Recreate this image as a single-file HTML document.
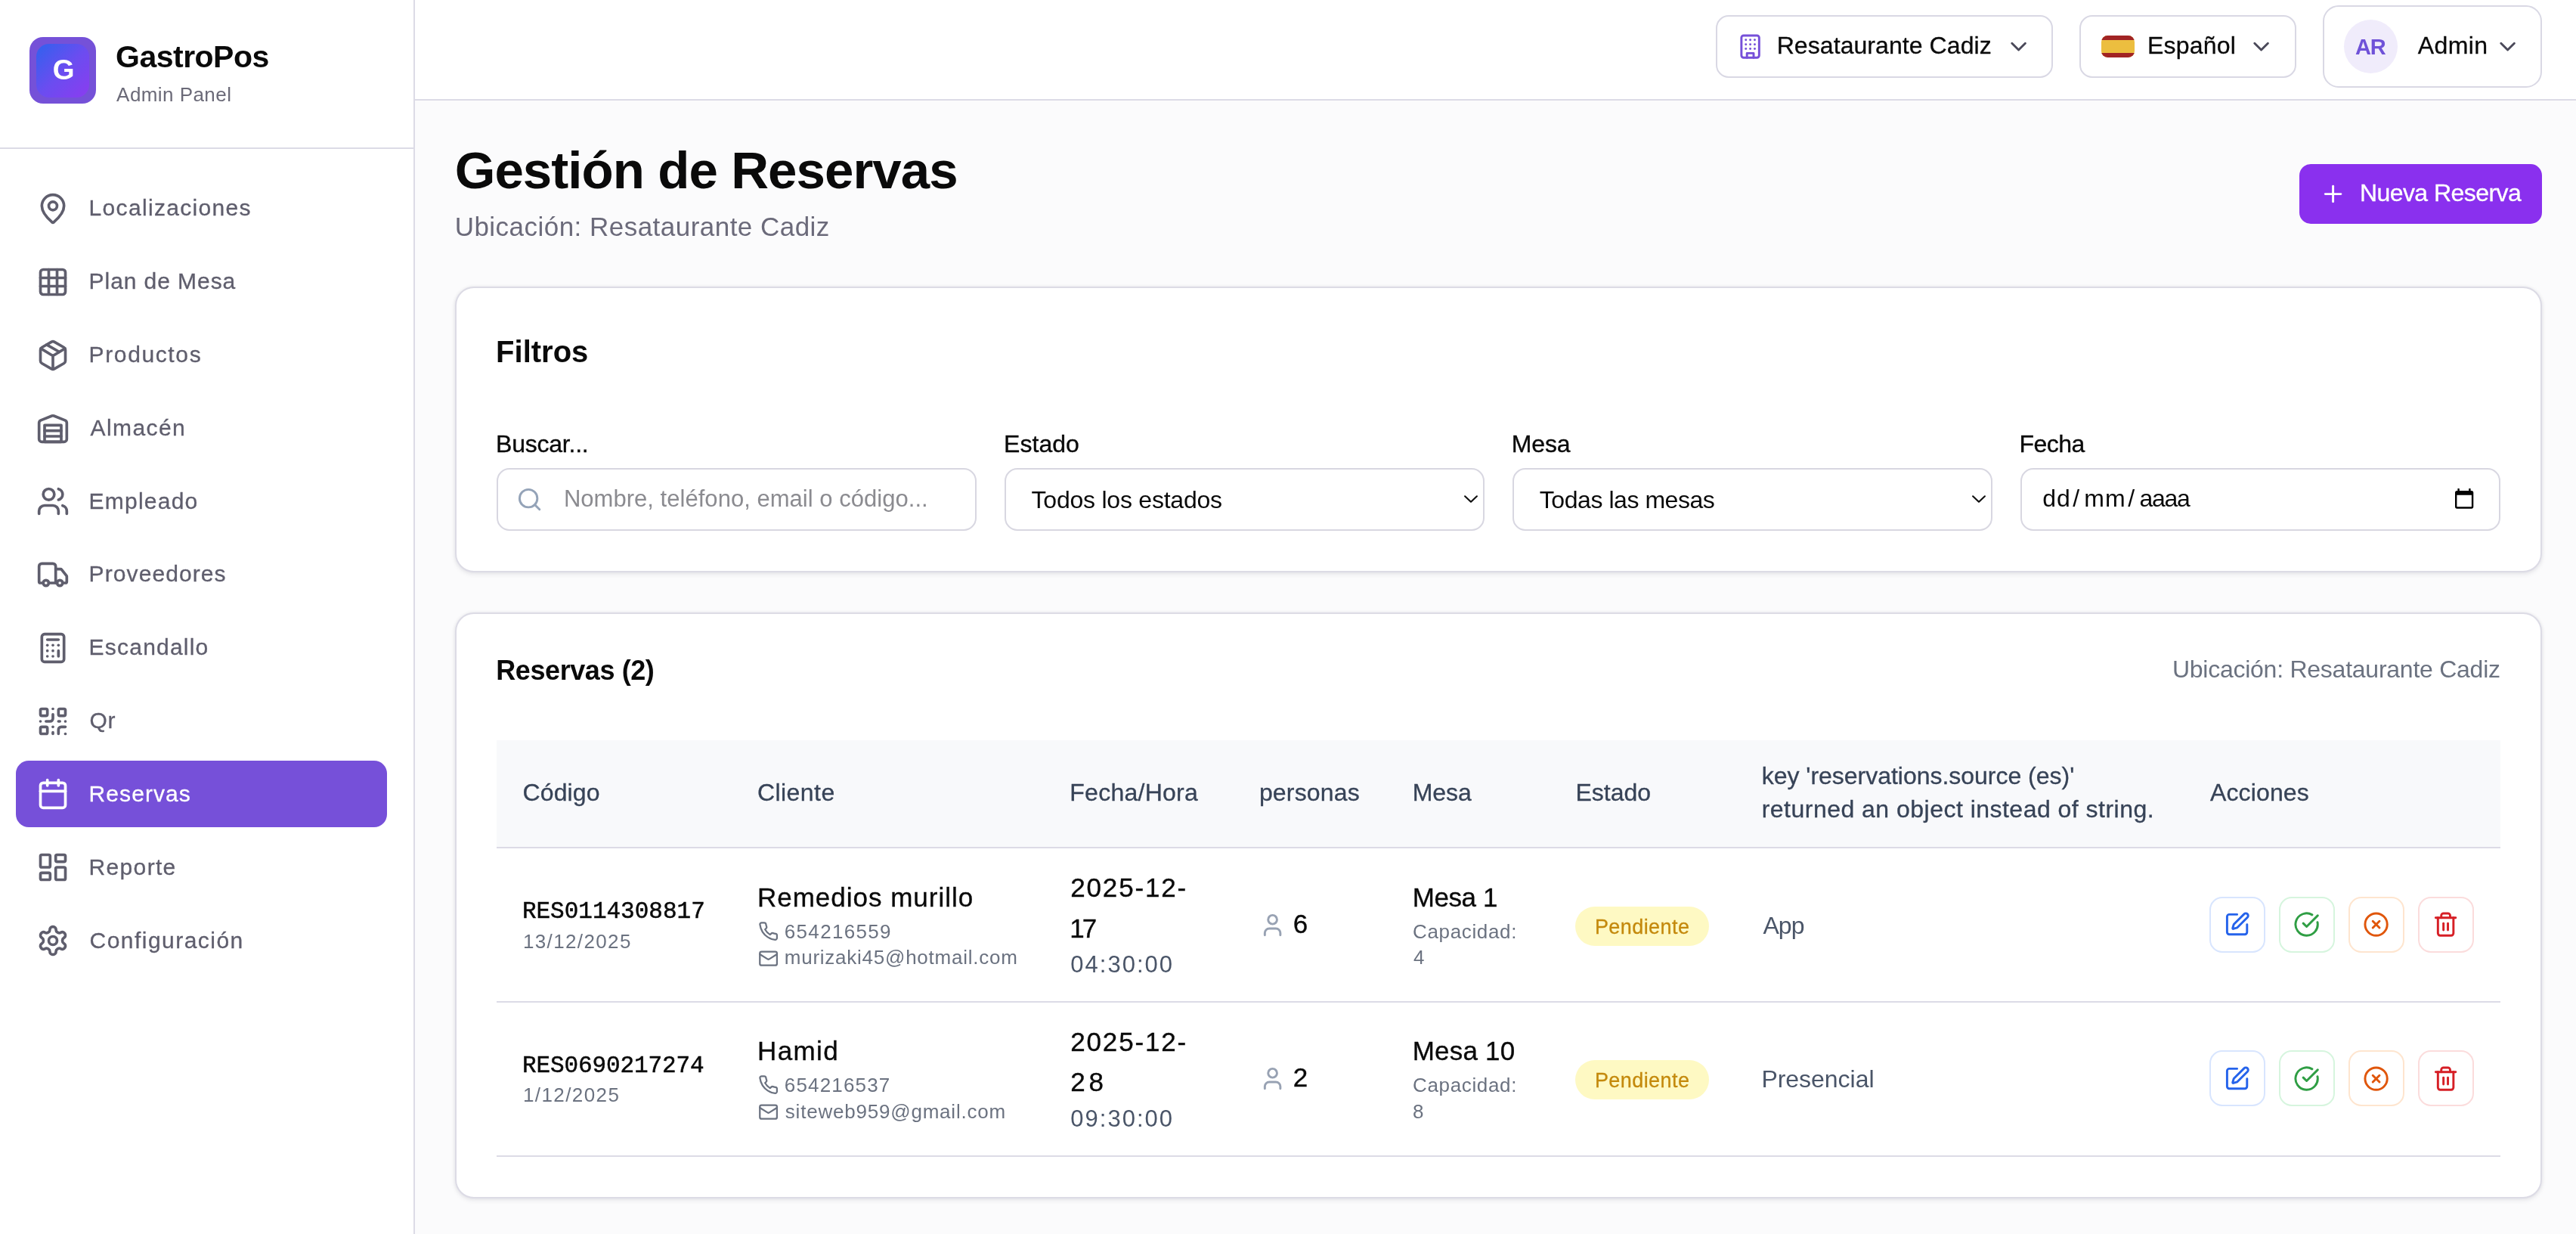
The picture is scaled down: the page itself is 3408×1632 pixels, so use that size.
<!DOCTYPE html><html lang="es"><head><meta charset="utf-8"><title>GastroPos - Gestión de Reservas</title><style>
*{margin:0;padding:0}
html,body{width:3408px;height:1632px;overflow:hidden;background:#fbfbfc}
body{font-family:"Liberation Sans",sans-serif;position:relative;will-change:transform}
.t{position:absolute;line-height:1;white-space:nowrap;font-weight:400;display:block;text-decoration:none}
.sans{font-family:"Liberation Sans",sans-serif}
.bold{font-family:"Liberation Sans",sans-serif;font-weight:700}
.mono{font-family:"Liberation Mono",monospace}
.ic{position:absolute;display:block;overflow:visible}
.sidebar{position:absolute;left:0;top:0;width:547px;height:1632px;background:#fff;border-right:2px solid #dcdbe6}
.topbar{position:absolute;left:549px;top:0;width:2859px;height:131px;background:#fff;border-bottom:2px solid #dcdbe6}
main{position:absolute;left:0;top:0;width:0;height:0}
button{font:inherit;padding:0;margin:0;cursor:pointer}
i{display:block}
@media (max-width:2600px){html{zoom:.5}}
</style></head><body><aside class="sidebar"><div class="logo" style="position:absolute;left:39.0px;top:49.0px;width:88.0px;height:88.0px;background:#7551d8;border-radius:18px;"><div style="position:absolute;left:9.0px;top:9.0px;width:70.0px;height:71.0px;background:linear-gradient(135deg,#2f62ee 0%,#6a4df0 50%,#8b3cf0 100%);border-radius:17px;"></div><span class="t bold" style="left:30.8px;top:25.0px;font-size:37px;color:#fff;">G</span></div><span class="t bold" style="left:153.1px;top:54.5px;font-size:41px;letter-spacing:-0.52px;color:#0a0a0a;">GastroPos</span><span class="t sans" style="left:154.1px;top:112.2px;font-size:26px;letter-spacing:0.44px;color:#6b6a78;">Admin Panel</span><div style="position:absolute;left:0.0px;top:195.0px;width:547.0px;height:2.0px;background:#dcdbe6;"></div><nav><a class="nav-item"><svg class="ic" style="left:47.9px;top:253.9px" width="44" height="44" viewBox="0 0 24 24" fill="none" stroke="#5f5e6d" stroke-width="2" stroke-linecap="round" stroke-linejoin="round"><path d="M20 10c0 4.993-5.539 10.193-7.399 11.799a1 1 0 0 1-1.202 0C9.539 20.193 4 14.993 4 10a8 8 0 0 1 16 0"/><circle cx="12" cy="10" r="3"/></svg><span class="t sans" style="left:117.6px;top:260.2px;font-size:30px;letter-spacing:1.32px;color:#5f5e6d;-webkit-text-stroke:0.3px #5f5e6d;">Localizaciones</span></a><a class="nav-item"><svg class="ic" style="left:47.9px;top:350.7px" width="44" height="44" viewBox="0 0 24 24" fill="none" stroke="#5f5e6d" stroke-width="2" stroke-linecap="round" stroke-linejoin="round"><rect width="18" height="18" x="3" y="3" rx="2"/><path d="M3 9h18"/><path d="M3 15h18"/><path d="M9 3v18"/><path d="M15 3v18"/></svg><span class="t sans" style="left:117.6px;top:357.0px;font-size:30px;letter-spacing:0.93px;color:#5f5e6d;-webkit-text-stroke:0.3px #5f5e6d;">Plan de Mesa</span></a><a class="nav-item"><svg class="ic" style="left:47.9px;top:447.5px" width="44" height="44" viewBox="0 0 24 24" fill="none" stroke="#5f5e6d" stroke-width="2" stroke-linecap="round" stroke-linejoin="round"><path d="M11 21.73a2 2 0 0 0 2 0l7-4A2 2 0 0 0 21 16V8a2 2 0 0 0-1-1.73l-7-4a2 2 0 0 0-2 0l-7 4A2 2 0 0 0 3 8v8a2 2 0 0 0 1 1.73z"/><path d="M12 22V12"/><path d="m3.3 7 7.703 4.734a2 2 0 0 0 1.994 0L20.7 7"/><path d="m7.5 4.27 9 5.15"/></svg><span class="t sans" style="left:117.6px;top:453.9px;font-size:30px;letter-spacing:1.62px;color:#5f5e6d;-webkit-text-stroke:0.3px #5f5e6d;">Productos</span></a><a class="nav-item"><svg class="ic" style="left:47.9px;top:544.3px" width="44" height="44" viewBox="0 0 24 24" fill="none" stroke="#5f5e6d" stroke-width="2" stroke-linecap="round" stroke-linejoin="round"><path d="M22 8.35V20a2 2 0 0 1-2 2H4a2 2 0 0 1-2-2V8.35A2 2 0 0 1 3.26 6.5l8-3.2a2 2 0 0 1 1.48 0l8 3.2A2 2 0 0 1 22 8.35Z"/><path d="M6 18h12"/><path d="M6 14h12"/><rect width="12" height="12" x="6" y="10"/></svg><span class="t sans" style="left:119.6px;top:550.7px;font-size:30px;letter-spacing:1.41px;color:#5f5e6d;-webkit-text-stroke:0.3px #5f5e6d;">Almacén</span></a><a class="nav-item"><svg class="ic" style="left:47.9px;top:641.1px" width="44" height="44" viewBox="0 0 24 24" fill="none" stroke="#5f5e6d" stroke-width="2" stroke-linecap="round" stroke-linejoin="round"><path d="M16 21v-2a4 4 0 0 0-4-4H6a4 4 0 0 0-4 4v2"/><circle cx="9" cy="7" r="4"/><path d="M22 21v-2a4 4 0 0 0-3-3.87"/><path d="M16 3.13a4 4 0 0 1 0 7.75"/></svg><span class="t sans" style="left:117.6px;top:647.6px;font-size:30px;letter-spacing:1.23px;color:#5f5e6d;-webkit-text-stroke:0.3px #5f5e6d;">Empleado</span></a><a class="nav-item"><svg class="ic" style="left:47.9px;top:737.9px" width="44" height="44" viewBox="0 0 24 24" fill="none" stroke="#5f5e6d" stroke-width="2" stroke-linecap="round" stroke-linejoin="round"><path d="M14 18V6a2 2 0 0 0-2-2H4a2 2 0 0 0-2 2v11a1 1 0 0 0 1 1h2"/><path d="M15 18H9"/><path d="M19 18h2a1 1 0 0 0 1-1v-3.65a1 1 0 0 0-.22-.624l-3.48-4.35A1 1 0 0 0 17.52 8H14"/><circle cx="17" cy="18" r="2"/><circle cx="7" cy="18" r="2"/></svg><span class="t sans" style="left:117.6px;top:744.4px;font-size:30px;letter-spacing:1.09px;color:#5f5e6d;-webkit-text-stroke:0.3px #5f5e6d;">Proveedores</span></a><a class="nav-item"><svg class="ic" style="left:47.9px;top:834.7px" width="44" height="44" viewBox="0 0 24 24" fill="none" stroke="#5f5e6d" stroke-width="2" stroke-linecap="round" stroke-linejoin="round"><rect width="16" height="20" x="4" y="2" rx="2"/><line x1="8" x2="16" y1="6" y2="6"/><line x1="16" x2="16" y1="14" y2="18"/><path d="M16 10h.01"/><path d="M12 10h.01"/><path d="M8 10h.01"/><path d="M12 14h.01"/><path d="M8 14h.01"/><path d="M12 18h.01"/><path d="M8 18h.01"/></svg><span class="t sans" style="left:117.6px;top:841.2px;font-size:30px;letter-spacing:1.21px;color:#5f5e6d;-webkit-text-stroke:0.3px #5f5e6d;">Escandallo</span></a><a class="nav-item"><svg class="ic" style="left:47.9px;top:931.5px" width="44" height="44" viewBox="0 0 24 24" fill="none" stroke="#5f5e6d" stroke-width="2" stroke-linecap="round" stroke-linejoin="round"><rect width="5" height="5" x="3" y="3" rx="1"/><rect width="5" height="5" x="16" y="3" rx="1"/><rect width="5" height="5" x="3" y="16" rx="1"/><path d="M21 16h-3a2 2 0 0 0-2 2v3"/><path d="M21 21v.01"/><path d="M12 7v3a2 2 0 0 1-2 2H7"/><path d="M3 12h.01"/><path d="M12 3h.01"/><path d="M12 16v.01"/><path d="M16 12h1"/><path d="M21 12v.01"/><path d="M12 21v-1"/></svg><span class="t sans" style="left:118.6px;top:938.1px;font-size:30px;letter-spacing:0.67px;color:#5f5e6d;-webkit-text-stroke:0.3px #5f5e6d;">Qr</span></a><div class="nav-active" style="position:absolute;left:21.0px;top:1006.0px;width:491.0px;height:88.0px;background:#7650d9;border-radius:17px;"></div><a class="nav-item"><svg class="ic" style="left:47.9px;top:1028.3px" width="44" height="44" viewBox="0 0 24 24" fill="none" stroke="#ffffff" stroke-width="2" stroke-linecap="round" stroke-linejoin="round"><path d="M8 2v4"/><path d="M16 2v4"/><rect width="18" height="18" x="3" y="4" rx="2"/><path d="M3 10h18"/></svg><span class="t sans" style="left:117.6px;top:1034.9px;font-size:30px;letter-spacing:1.08px;color:#ffffff;-webkit-text-stroke:0.3px #ffffff;">Reservas</span></a><a class="nav-item"><svg class="ic" style="left:47.9px;top:1125.1px" width="44" height="44" viewBox="0 0 24 24" fill="none" stroke="#5f5e6d" stroke-width="2" stroke-linecap="round" stroke-linejoin="round"><rect width="7" height="9" x="3" y="3" rx="1"/><rect width="7" height="5" x="14" y="3" rx="1"/><rect width="7" height="9" x="14" y="12" rx="1"/><rect width="7" height="5" x="3" y="16" rx="1"/></svg><span class="t sans" style="left:117.6px;top:1131.8px;font-size:30px;letter-spacing:1.33px;color:#5f5e6d;-webkit-text-stroke:0.3px #5f5e6d;">Reporte</span></a><a class="nav-item"><svg class="ic" style="left:47.9px;top:1221.9px" width="44" height="44" viewBox="0 0 24 24" fill="none" stroke="#5f5e6d" stroke-width="2" stroke-linecap="round" stroke-linejoin="round"><path d="M12.22 2h-.44a2 2 0 0 0-2 2v.18a2 2 0 0 1-1 1.73l-.43.25a2 2 0 0 1-2 0l-.15-.08a2 2 0 0 0-2.73.73l-.22.38a2 2 0 0 0 .73 2.73l.15.1a2 2 0 0 1 1 1.72v.51a2 2 0 0 1-1 1.74l-.15.09a2 2 0 0 0-.73 2.73l.22.38a2 2 0 0 0 2.73.73l.15-.08a2 2 0 0 1 2 0l.43.25a2 2 0 0 1 1 1.73V20a2 2 0 0 0 2 2h.44a2 2 0 0 0 2-2v-.18a2 2 0 0 1 1-1.73l.43-.25a2 2 0 0 1 2 0l.15.08a2 2 0 0 0 2.73-.73l.22-.39a2 2 0 0 0-.73-2.73l-.15-.08a2 2 0 0 1-1-1.74v-.5a2 2 0 0 1 1-1.74l.15-.09a2 2 0 0 0 .73-2.73l-.22-.38a2 2 0 0 0-2.73-.73l-.15.08a2 2 0 0 1-2 0l-.43-.25a2 2 0 0 1-1-1.73V4a2 2 0 0 0-2-2z"/><circle cx="12" cy="12" r="3"/></svg><span class="t sans" style="left:118.6px;top:1228.6px;font-size:30px;letter-spacing:1.46px;color:#5f5e6d;-webkit-text-stroke:0.3px #5f5e6d;">Configuración</span></a></nav></aside>
<header class="topbar"><div class="hbtn" style="position:absolute;left:1721.0px;top:20.0px;width:446.0px;height:83.0px;border:2px solid #d9d8e4;box-sizing:border-box;background:#fff;border-radius:17px;"><svg class="ic" style="left:25.9px;top:21.8px" width="35.2" height="35.2" viewBox="0 0 24 24" fill="none" stroke="#7650d9" stroke-width="2" stroke-linecap="round" stroke-linejoin="round"><rect width="16" height="20" x="4" y="2" rx="2" ry="2"/><path d="M9 22v-4h6v4"/><path d="M8 6h.01"/><path d="M16 6h.01"/><path d="M12 6h.01"/><path d="M12 10h.01"/><path d="M12 14h.01"/><path d="M16 10h.01"/><path d="M16 14h.01"/><path d="M8 10h.01"/><path d="M8 14h.01"/></svg><span class="t sans" style="left:78.7px;top:22.3px;font-size:32px;letter-spacing:0.07px;color:#0a0a0a;-webkit-text-stroke:0.3px #0a0a0a;">Resataurante Cadiz</span><svg class="ic" style="left:381.0px;top:22.4px" width="35.2" height="35.2" viewBox="0 0 24 24" fill="none" stroke="#4b4a5a" stroke-width="2" stroke-linecap="round" stroke-linejoin="round"><path d="m6 9 6 6 6-6"/></svg></div><div class="hbtn" style="position:absolute;left:2202.0px;top:20.0px;width:287.0px;height:83.0px;border:2px solid #d9d8e4;box-sizing:border-box;background:#fff;border-radius:17px;"><div class="flag" style="position:absolute;left:27.0px;top:24.6px;width:44.0px;height:29.3px;border-radius:8.5px;overflow:hidden;background:#ecbe3f;"><i style="position:absolute;left:0;top:0;width:100%;height:6.2px;background:#a12424"></i><i style="position:absolute;left:0;bottom:0;width:100%;height:6.2px;background:#a12424"></i></div><span class="t sans" style="left:87.9px;top:22.3px;font-size:32px;letter-spacing:0.21px;color:#0a0a0a;-webkit-text-stroke:0.3px #0a0a0a;">Español</span><svg class="ic" style="left:221.0px;top:22.4px" width="35.2" height="35.2" viewBox="0 0 24 24" fill="none" stroke="#4b4a5a" stroke-width="2" stroke-linecap="round" stroke-linejoin="round"><path d="m6 9 6 6 6-6"/></svg></div><div class="hbtn" style="position:absolute;left:2524.0px;top:7.0px;width:290.0px;height:109.0px;border:2px solid #d9d8e4;box-sizing:border-box;background:#fff;border-radius:21px;"><div style="position:absolute;left:26.0px;top:17.0px;width:71.0px;height:71.0px;border-radius:50%;background:#f0ecfb;"><span class="t bold" style="left:14.9px;top:21.8px;font-size:29px;letter-spacing:-1.14px;color:#6f52d8;">AR</span></div><span class="t sans" style="left:123.8px;top:35.3px;font-size:32px;letter-spacing:0.37px;color:#0a0a0a;-webkit-text-stroke:0.3px #0a0a0a;">Admin</span><svg class="ic" style="left:224.9px;top:35.4px" width="35.2" height="35.2" viewBox="0 0 24 24" fill="none" stroke="#4b4a5a" stroke-width="2" stroke-linecap="round" stroke-linejoin="round"><path d="m6 9 6 6 6-6"/></svg></div></header>
<main><h1 class="t bold" style="left:601.7px;top:190.9px;font-size:69px;letter-spacing:-0.93px;color:#0a0a0a;">Gestión de Reservas</h1><p class="t sans" style="left:601.7px;top:281.6px;font-size:35px;letter-spacing:0.47px;color:#6b6a7a;">Ubicación: Resataurante Cadiz</p><div class="btn-primary" style="position:absolute;left:3042.0px;top:217.0px;width:321.0px;height:79.0px;background:#8a30ee;border-radius:15px;"><svg class="ic" style="left:26.9px;top:21.9px" width="35.2" height="35.2" viewBox="0 0 24 24" fill="none" stroke="#fff" stroke-width="2" stroke-linecap="round" stroke-linejoin="round"><path d="M5 12h14"/><path d="M12 5v14"/></svg><span class="t sans" style="left:79.9px;top:21.9px;font-size:32px;letter-spacing:-0.56px;color:#fff;-webkit-text-stroke:0.3px #fff;">Nueva Reserva</span></div><section class="card" style="position:absolute;left:602.0px;top:379.0px;width:2761.0px;height:378.0px;background:#fff;border:2px solid #dcdbe5;box-sizing:border-box;border-radius:25px;box-shadow:0 3px 6px rgba(30,30,60,.07),0 0 5px rgba(30,30,60,.07);"><h2 class="t bold" style="left:52.1px;top:64.2px;font-size:40px;color:#0a0a0a;">Filtros</h2><label class="t sans" style="left:52.1px;top:190.1px;font-size:32px;letter-spacing:-0.24px;color:#0a0a0a;-webkit-text-stroke:0.35px #0a0a0a;">Buscar...</label><label class="t sans" style="left:724.1px;top:190.1px;font-size:32px;letter-spacing:0.03px;color:#0a0a0a;-webkit-text-stroke:0.35px #0a0a0a;">Estado</label><label class="t sans" style="left:1395.8px;top:190.1px;font-size:32px;letter-spacing:-0.15px;color:#0a0a0a;-webkit-text-stroke:0.35px #0a0a0a;">Mesa</label><label class="t sans" style="left:2067.5px;top:190.1px;font-size:32px;letter-spacing:-0.54px;color:#0a0a0a;-webkit-text-stroke:0.35px #0a0a0a;">Fecha</label><div class="field" style="position:absolute;left:53.0px;top:238.0px;width:635.0px;height:83.0px;border:2px solid #d8d7e1;box-sizing:border-box;border-radius:17px;background:#fff;"><svg class="ic" style="left:23.9px;top:21.5px" width="35.2" height="35.2" viewBox="0 0 24 24" fill="none" stroke="#94a3b8" stroke-width="2" stroke-linecap="round" stroke-linejoin="round"><circle cx="11" cy="11" r="8"/><path d="m21 21-4.3-4.3"/></svg><span class="t sans" style="left:86.9px;top:23.4px;font-size:31px;letter-spacing:0.03px;color:#8b8b90;">Nombre, teléfono, email o código...</span></div><div class="field" style="position:absolute;left:725.0px;top:238.0px;width:635.0px;height:83.0px;border:2px solid #d8d7e1;box-sizing:border-box;border-radius:17px;background:#fff;"><span class="t sans" style="left:33.6px;top:23.6px;font-size:32px;letter-spacing:-0.23px;color:#0a0a0a;">Todos los estados</span><svg class="ic" style="left:602.6px;top:31.4px" width="24" height="16" viewBox="0 0 24 16" fill="none" stroke="#111" stroke-width="2.2" stroke-linecap="round" stroke-linejoin="round"><path d="M4.1 4.3 12 11.7 19.900 4.3"/></svg></div><div class="field" style="position:absolute;left:1397.0px;top:238.0px;width:635.0px;height:83.0px;border:2px solid #d8d7e1;box-sizing:border-box;border-radius:17px;background:#fff;"><span class="t sans" style="left:33.8px;top:23.6px;font-size:32px;letter-spacing:-0.45px;color:#0a0a0a;">Todas las mesas</span><svg class="ic" style="left:602.6px;top:31.4px" width="24" height="16" viewBox="0 0 24 16" fill="none" stroke="#111" stroke-width="2.2" stroke-linecap="round" stroke-linejoin="round"><path d="M4.1 4.3 12 11.7 19.900 4.3"/></svg></div><div class="field" style="position:absolute;left:2069.0px;top:238.0px;width:635.0px;height:83.0px;border:2px solid #d8d7e1;box-sizing:border-box;border-radius:17px;background:#fff;"><span class="t sans" style="left:27.2px;top:22.2px;font-size:32px;letter-spacing:0.90px;color:#0a0a0a;">dd</span><span class="t sans" style="left:67.3px;top:22.2px;font-size:32px;color:#0a0a0a;">/</span><span class="t sans" style="left:82.3px;top:22.2px;font-size:32px;letter-spacing:1.04px;color:#0a0a0a;">mm</span><span class="t sans" style="left:140.3px;top:22.2px;font-size:32px;color:#0a0a0a;">/</span><span class="t sans" style="left:155.4px;top:22.2px;font-size:32px;letter-spacing:-1.30px;color:#0a0a0a;">aaaa</span><svg class="ic" style="left:573.0px;top:25.1px" width="24.3" height="26.7" viewBox="0 0 24.3 26.7" fill="#000"><path fill-rule="evenodd" d="M2.600 2.900h19.100a2.600 2.600 0 0 1 2.600 2.600v18.600a2.600 2.600 0 0 1-2.600 2.600H2.600A2.600 2.600 0 0 1 0 24.100V5.500a2.600 2.600 0 0 1 2.600-2.600zM2.400 8.700v15a.6.600 0 0 0 .6.600h18.300a.6.600 0 0 0 .6-.6v-15z"/><rect x="3.400" y="0" width="2.400" height="4" rx=".6"/><rect x="18.200" y="0" width="2.400" height="4" rx=".6"/></svg></div></section><section class="card" style="position:absolute;left:602.0px;top:810.0px;width:2761.0px;height:775.0px;background:#fff;border:2px solid #dcdbe5;box-sizing:border-box;border-radius:25px;box-shadow:0 3px 6px rgba(30,30,60,.07),0 0 5px rgba(30,30,60,.07);"><h2 class="t bold" style="left:52.3px;top:57.0px;font-size:36px;letter-spacing:-0.42px;color:#0a0a0a;">Reservas (2)</h2><span class="t sans" style="left:2269.9px;top:56.6px;font-size:32px;letter-spacing:-0.25px;color:#6b7280;">Ubicación: Resataurante Cadiz</span><div class="thead" style="position:absolute;left:53.0px;top:167.0px;width:2651.0px;height:141.0px;background:#f8f9fb;"><span class="t sans" style="left:34.5px;top:52.9px;font-size:32px;letter-spacing:0.14px;color:#374357;-webkit-text-stroke:0.3px #374357;">Código</span><span class="t sans" style="left:345.0px;top:52.9px;font-size:32px;letter-spacing:0.43px;color:#374357;-webkit-text-stroke:0.3px #374357;">Cliente</span><span class="t sans" style="left:758.3px;top:52.9px;font-size:32px;letter-spacing:0.26px;color:#374357;-webkit-text-stroke:0.3px #374357;">Fecha/Hora</span><span class="t sans" style="left:1008.9px;top:52.9px;font-size:32px;letter-spacing:0.17px;color:#374357;-webkit-text-stroke:0.3px #374357;">personas</span><span class="t sans" style="left:1211.7px;top:52.9px;font-size:32px;letter-spacing:-0.02px;color:#374357;-webkit-text-stroke:0.3px #374357;">Mesa</span><span class="t sans" style="left:1427.4px;top:52.9px;font-size:32px;letter-spacing:0.01px;color:#374357;-webkit-text-stroke:0.3px #374357;">Estado</span><span class="t sans" style="left:2266.9px;top:52.9px;font-size:32px;letter-spacing:0.15px;color:#374357;-webkit-text-stroke:0.3px #374357;">Acciones</span><span class="t sans" style="left:1673.7px;top:30.6px;font-size:32px;letter-spacing:-0.02px;color:#374357;-webkit-text-stroke:0.3px #374357;">key &#x27;reservations.source (es)&#x27;</span><span class="t sans" style="left:1673.7px;top:74.7px;font-size:32px;letter-spacing:0.48px;color:#374357;-webkit-text-stroke:0.3px #374357;">returned an object instead of string.</span></div><div style="position:absolute;left:53.0px;top:308.0px;width:2651.0px;height:2.0px;background:#dcdbe6;"></div><div class="row" style="position:absolute;left:53.0px;top:310.0px;width:2651.0px;height:201.3px;"><span class="t mono" style="left:33.9px;top:68.3px;font-size:31px;color:#0a0a0a;-webkit-text-stroke:0.5px #0a0a0a;">RES0114308817</span><span class="t sans" style="left:34.9px;top:110.1px;font-size:26px;letter-spacing:1.37px;color:#6b7280;">13/12/2025</span><span class="t sans" style="left:345.0px;top:46.9px;font-size:35px;letter-spacing:0.99px;color:#0a0a0a;-webkit-text-stroke:0.35px #0a0a0a;">Remedios murillo</span><svg class="ic" style="left:345.9px;top:96.1px" width="27.2" height="27.2" viewBox="0 0 24 24" fill="none" stroke="#6b7280" stroke-width="2" stroke-linecap="round" stroke-linejoin="round"><path d="M22 16.92v3a2 2 0 0 1-2.18 2 19.79 19.79 0 0 1-8.63-3.07 19.5 19.5 0 0 1-6-6 19.79 19.79 0 0 1-3.07-8.67A2 2 0 0 1 4.11 2h3a2 2 0 0 1 2 1.72 12.84 12.84 0 0 0 .7 2.81 2 2 0 0 1-.45 2.11L8.09 9.91a16 16 0 0 0 6 6l1.27-1.27a2 2 0 0 1 2.11-.45 12.84 12.84 0 0 0 2.81.7A2 2 0 0 1 22 16.92z"/></svg><span class="t sans" style="left:380.8px;top:97.1px;font-size:26px;letter-spacing:1.32px;color:#6b7280;">654216559</span><svg class="ic" style="left:345.9px;top:131.6px" width="27.2" height="27.2" viewBox="0 0 24 24" fill="none" stroke="#6b7280" stroke-width="2" stroke-linecap="round" stroke-linejoin="round"><rect width="20" height="16" x="2" y="4" rx="2"/><path d="m22 7-8.97 5.7a1.94 1.94 0 0 1-2.06 0L2 7"/></svg><span class="t sans" style="left:380.8px;top:131.3px;font-size:26px;letter-spacing:0.75px;color:#6b7280;">murizaki45@hotmail.com</span><span class="t sans" style="left:759.3px;top:34.4px;font-size:35px;letter-spacing:1.82px;color:#0a0a0a;-webkit-text-stroke:0.35px #0a0a0a;">2025-12-</span><span class="t sans" style="left:758.3px;top:87.5px;font-size:35px;letter-spacing:-3.00px;color:#0a0a0a;-webkit-text-stroke:0.35px #0a0a0a;">17</span><span class="t sans" style="left:759.3px;top:138.4px;font-size:31px;letter-spacing:2.01px;color:#4a5568;">04:30:00</span><svg class="ic" style="left:1009.1px;top:83.6px" width="35.2" height="35.2" viewBox="0 0 24 24" fill="none" stroke="#98a2b3" stroke-width="2" stroke-linecap="round" stroke-linejoin="round"><path d="M19 21v-2a4 4 0 0 0-4-4H9a4 4 0 0 0-4 4v2"/><circle cx="12" cy="7" r="4"/></svg><span class="t sans" style="left:1053.7px;top:82.0px;font-size:35px;color:#0a0a0a;-webkit-text-stroke:0.35px #0a0a0a;">6</span><span class="t sans" style="left:1211.7px;top:46.9px;font-size:35px;letter-spacing:-0.40px;color:#0a0a0a;-webkit-text-stroke:0.35px #0a0a0a;">Mesa 1</span><span class="t sans" style="left:1212.0px;top:97.1px;font-size:26px;letter-spacing:0.65px;color:#6b7280;">Capacidad:</span><span class="t sans" style="left:1213.0px;top:131.3px;font-size:26px;color:#6b7280;">4</span><div class="badge" style="position:absolute;left:1427.0px;top:77.0px;width:177.0px;height:52.0px;background:#fef9c3;border-radius:26px;"><span class="t sans" style="left:25.9px;top:13.5px;font-size:27px;letter-spacing:0.43px;color:#c4890c;-webkit-text-stroke:0.3px #c4890c;">Pendiente</span></div><span class="t sans" style="left:1675.4px;top:85.5px;font-size:32px;letter-spacing:-0.92px;color:#4a5568;">App</span><button class="abtn" style="position:absolute;left:2266.0px;top:64.0px;width:74.0px;height:74.0px;border:2px solid #d8e5fe;box-sizing:border-box;border-radius:17px;background:#fff;"><svg class="ic" style="left:17.4px;top:17.4px" width="35.2" height="35.2" viewBox="0 0 24 24" fill="none" stroke="#2563eb" stroke-width="2" stroke-linecap="round" stroke-linejoin="round"><path d="M12 3H5a2 2 0 0 0-2 2v14a2 2 0 0 0 2 2h14a2 2 0 0 0 2-2v-7"/><path d="M18.375 2.625a1 1 0 0 1 3 3l-9.013 9.014a2 2 0 0 1-.853.505l-2.873.84a.5.5 0 0 1-.62-.62l.84-2.873a2 2 0 0 1 .506-.852z"/></svg></button><button class="abtn" style="position:absolute;left:2358.0px;top:64.0px;width:74.0px;height:74.0px;border:2px solid #d6f5de;box-sizing:border-box;border-radius:17px;background:#fff;"><svg class="ic" style="left:17.4px;top:17.4px" width="35.2" height="35.2" viewBox="0 0 24 24" fill="none" stroke="#2f9e44" stroke-width="2" stroke-linecap="round" stroke-linejoin="round"><path d="M21.801 10A10 10 0 1 1 17 3.335"/><path d="m9 11 3 3L22 4"/></svg></button><button class="abtn" style="position:absolute;left:2450.0px;top:64.0px;width:74.0px;height:74.0px;border:2px solid #fee5cf;box-sizing:border-box;border-radius:17px;background:#fff;"><svg class="ic" style="left:17.4px;top:17.4px" width="35.2" height="35.2" viewBox="0 0 24 24" fill="none" stroke="#e0560b" stroke-width="2" stroke-linecap="round" stroke-linejoin="round"><circle cx="12" cy="12" r="10"/><path d="m15 9-6 6"/><path d="m9 9 6 6"/></svg></button><button class="abtn" style="position:absolute;left:2542.0px;top:64.0px;width:74.0px;height:74.0px;border:2px solid #fbdcdc;box-sizing:border-box;border-radius:17px;background:#fff;"><svg class="ic" style="left:17.4px;top:17.4px" width="35.2" height="35.2" viewBox="0 0 24 24" fill="none" stroke="#d61f26" stroke-width="2" stroke-linecap="round" stroke-linejoin="round"><path d="M3 6h18"/><path d="M19 6v14c0 1-1 2-2 2H7c-1 0-2-1-2-2V6"/><path d="M8 6V4c0-1 1-2 2-2h4c1 0 2 1 2 2v2"/><line x1="10" x2="10" y1="11" y2="17"/><line x1="14" x2="14" y1="11" y2="17"/></svg></button></div><div style="position:absolute;left:53.0px;top:512.0px;width:2651.0px;height:2.0px;background:#dcdbe6;"></div><div class="row" style="position:absolute;left:53.0px;top:513.3px;width:2651.0px;height:201.3px;"><span class="t mono" style="left:33.9px;top:68.3px;font-size:31px;letter-spacing:-0.09px;color:#0a0a0a;-webkit-text-stroke:0.5px #0a0a0a;">RES0690217274</span><span class="t sans" style="left:34.9px;top:110.1px;font-size:26px;letter-spacing:1.42px;color:#6b7280;">1/12/2025</span><span class="t sans" style="left:345.0px;top:46.9px;font-size:35px;letter-spacing:1.38px;color:#0a0a0a;-webkit-text-stroke:0.35px #0a0a0a;">Hamid</span><svg class="ic" style="left:345.9px;top:96.1px" width="27.2" height="27.2" viewBox="0 0 24 24" fill="none" stroke="#6b7280" stroke-width="2" stroke-linecap="round" stroke-linejoin="round"><path d="M22 16.92v3a2 2 0 0 1-2.18 2 19.79 19.79 0 0 1-8.63-3.07 19.5 19.5 0 0 1-6-6 19.79 19.79 0 0 1-3.07-8.67A2 2 0 0 1 4.11 2h3a2 2 0 0 1 2 1.72 12.84 12.84 0 0 0 .7 2.81 2 2 0 0 1-.45 2.11L8.09 9.91a16 16 0 0 0 6 6l1.27-1.27a2 2 0 0 1 2.11-.45 12.84 12.84 0 0 0 2.81.7A2 2 0 0 1 22 16.92z"/></svg><span class="t sans" style="left:380.8px;top:97.1px;font-size:26px;letter-spacing:1.17px;color:#6b7280;">654216537</span><svg class="ic" style="left:345.9px;top:131.6px" width="27.2" height="27.2" viewBox="0 0 24 24" fill="none" stroke="#6b7280" stroke-width="2" stroke-linecap="round" stroke-linejoin="round"><rect width="20" height="16" x="2" y="4" rx="2"/><path d="m22 7-8.97 5.7a1.94 1.94 0 0 1-2.06 0L2 7"/></svg><span class="t sans" style="left:381.8px;top:131.3px;font-size:26px;letter-spacing:0.79px;color:#6b7280;">siteweb959@gmail.com</span><span class="t sans" style="left:759.3px;top:34.4px;font-size:35px;letter-spacing:1.82px;color:#0a0a0a;-webkit-text-stroke:0.35px #0a0a0a;">2025-12-</span><span class="t sans" style="left:759.3px;top:87.5px;font-size:35px;letter-spacing:4.83px;color:#0a0a0a;-webkit-text-stroke:0.35px #0a0a0a;">28</span><span class="t sans" style="left:759.3px;top:138.4px;font-size:31px;letter-spacing:2.01px;color:#4a5568;">09:30:00</span><svg class="ic" style="left:1009.1px;top:83.6px" width="35.2" height="35.2" viewBox="0 0 24 24" fill="none" stroke="#98a2b3" stroke-width="2" stroke-linecap="round" stroke-linejoin="round"><path d="M19 21v-2a4 4 0 0 0-4-4H9a4 4 0 0 0-4 4v2"/><circle cx="12" cy="7" r="4"/></svg><span class="t sans" style="left:1053.7px;top:82.0px;font-size:35px;color:#0a0a0a;-webkit-text-stroke:0.35px #0a0a0a;">2</span><span class="t sans" style="left:1211.7px;top:46.9px;font-size:35px;letter-spacing:0.20px;color:#0a0a0a;-webkit-text-stroke:0.35px #0a0a0a;">Mesa 10</span><span class="t sans" style="left:1212.0px;top:97.1px;font-size:26px;letter-spacing:0.65px;color:#6b7280;">Capacidad:</span><span class="t sans" style="left:1212.0px;top:131.3px;font-size:26px;color:#6b7280;">8</span><div class="badge" style="position:absolute;left:1427.0px;top:77.0px;width:177.0px;height:52.0px;background:#fef9c3;border-radius:26px;"><span class="t sans" style="left:25.9px;top:13.5px;font-size:27px;letter-spacing:0.43px;color:#c4890c;-webkit-text-stroke:0.3px #c4890c;">Pendiente</span></div><span class="t sans" style="left:1673.4px;top:85.5px;font-size:32px;letter-spacing:-0.03px;color:#4a5568;">Presencial</span><button class="abtn" style="position:absolute;left:2266.0px;top:64.0px;width:74.0px;height:74.0px;border:2px solid #d8e5fe;box-sizing:border-box;border-radius:17px;background:#fff;"><svg class="ic" style="left:17.4px;top:17.4px" width="35.2" height="35.2" viewBox="0 0 24 24" fill="none" stroke="#2563eb" stroke-width="2" stroke-linecap="round" stroke-linejoin="round"><path d="M12 3H5a2 2 0 0 0-2 2v14a2 2 0 0 0 2 2h14a2 2 0 0 0 2-2v-7"/><path d="M18.375 2.625a1 1 0 0 1 3 3l-9.013 9.014a2 2 0 0 1-.853.505l-2.873.84a.5.5 0 0 1-.62-.62l.84-2.873a2 2 0 0 1 .506-.852z"/></svg></button><button class="abtn" style="position:absolute;left:2358.0px;top:64.0px;width:74.0px;height:74.0px;border:2px solid #d6f5de;box-sizing:border-box;border-radius:17px;background:#fff;"><svg class="ic" style="left:17.4px;top:17.4px" width="35.2" height="35.2" viewBox="0 0 24 24" fill="none" stroke="#2f9e44" stroke-width="2" stroke-linecap="round" stroke-linejoin="round"><path d="M21.801 10A10 10 0 1 1 17 3.335"/><path d="m9 11 3 3L22 4"/></svg></button><button class="abtn" style="position:absolute;left:2450.0px;top:64.0px;width:74.0px;height:74.0px;border:2px solid #fee5cf;box-sizing:border-box;border-radius:17px;background:#fff;"><svg class="ic" style="left:17.4px;top:17.4px" width="35.2" height="35.2" viewBox="0 0 24 24" fill="none" stroke="#e0560b" stroke-width="2" stroke-linecap="round" stroke-linejoin="round"><circle cx="12" cy="12" r="10"/><path d="m15 9-6 6"/><path d="m9 9 6 6"/></svg></button><button class="abtn" style="position:absolute;left:2542.0px;top:64.0px;width:74.0px;height:74.0px;border:2px solid #fbdcdc;box-sizing:border-box;border-radius:17px;background:#fff;"><svg class="ic" style="left:17.4px;top:17.4px" width="35.2" height="35.2" viewBox="0 0 24 24" fill="none" stroke="#d61f26" stroke-width="2" stroke-linecap="round" stroke-linejoin="round"><path d="M3 6h18"/><path d="M19 6v14c0 1-1 2-2 2H7c-1 0-2-1-2-2V6"/><path d="M8 6V4c0-1 1-2 2-2h4c1 0 2 1 2 2v2"/><line x1="10" x2="10" y1="11" y2="17"/><line x1="14" x2="14" y1="11" y2="17"/></svg></button></div><div style="position:absolute;left:53.0px;top:715.5px;width:2651.0px;height:2.0px;background:#dcdbe6;"></div></section></main></body></html>
